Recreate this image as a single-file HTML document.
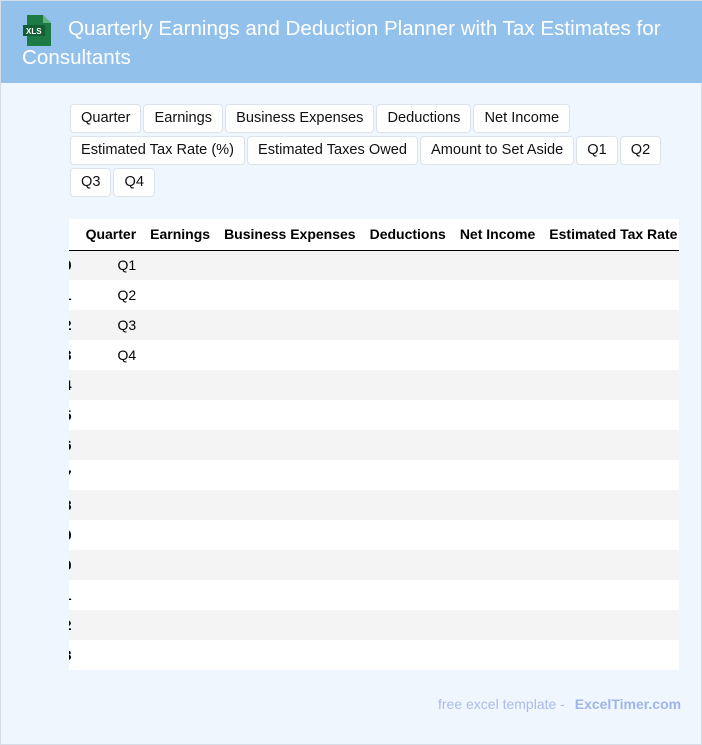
<!DOCTYPE html>
<html><head><style>
*{box-sizing:border-box;margin:0;padding:0}
body{width:702px;height:745px;background:#f0f6fe;font-family:"Liberation Sans",sans-serif;position:relative;overflow:hidden;border:1px solid #d6dde6}
.hdr{position:absolute;left:0;top:0;width:702px;height:82px;background:#92c1ec;color:#fff;font-size:20.6px;line-height:29px;padding:13px 20px 0 21px}
.tags{position:absolute;left:69px;top:103px;width:610px}
.tag{display:inline-block;float:left;height:29px;line-height:27px;border:1px solid #dde3ea;border-radius:4px;background:#fff;font-size:14.6px;padding:0 10px;margin:0 2px 3px 0;color:#111}
.tbl{position:absolute;left:68px;top:218px;width:610px;height:451px;overflow:hidden;background:#fff}
table{border-collapse:collapse;position:absolute;left:-20px;top:0;font-size:14px;white-space:nowrap}
th{height:31px;font-weight:bold;text-align:right;padding:0 7px;border-bottom:1px solid #000}
td{height:30px;padding:0 7px;text-align:right}
tr:nth-child(even) td{background:#f4f4f4}
td:first-child{font-weight:bold}
.ft{position:absolute;left:437px;top:695px;font-size:14px;color:#a9bce9}
.ft b{color:#9fb4ec;margin-left:6px}
.ic{position:absolute;left:21px;top:14px}
</style></head><body>
<div class="hdr"><span style="display:inline-block;width:46px"></span>Quarterly Earnings and Deduction Planner with Tax Estimates for Consultants</div>
<svg class="ic" width="30" height="31" viewBox="0 0 30 31"><path d="M5 0h16l8 8v23H5z" fill="#1d7a45"/><path d="M21 0v8h8z" fill="#5fb37f"/><rect x="1" y="10" width="22" height="11" fill="#155d34"/><text x="4" y="19" font-size="8" fill="#fff" font-family="Liberation Sans" font-weight="bold">XLS</text></svg>
<div class="tags">
<span class="tag">Quarter</span><span class="tag">Earnings</span><span class="tag">Business Expenses</span><span class="tag">Deductions</span><span class="tag">Net Income</span>
<span class="tag" style="clear:left">Estimated Tax Rate (%)</span><span class="tag">Estimated Taxes Owed</span><span class="tag">Amount to Set Aside</span><span class="tag">Q1</span><span class="tag">Q2</span>
<span class="tag" style="clear:left">Q3</span><span class="tag">Q4</span>
</div>
<div class="tbl"><table>
<tr><th style="width:30px"></th><th>Quarter</th><th>Earnings</th><th>Business Expenses</th><th>Deductions</th><th>Net Income</th><th>Estimated Tax Rate (%)</th></tr>
<tr><td>0</td><td>Q1</td><td></td><td></td><td></td><td></td><td></td></tr>
<tr><td>1</td><td>Q2</td><td></td><td></td><td></td><td></td><td></td></tr>
<tr><td>2</td><td>Q3</td><td></td><td></td><td></td><td></td><td></td></tr>
<tr><td>3</td><td>Q4</td><td></td><td></td><td></td><td></td><td></td></tr>
<tr><td>4</td><td></td><td></td><td></td><td></td><td></td><td></td></tr>
<tr><td>5</td><td></td><td></td><td></td><td></td><td></td><td></td></tr>
<tr><td>6</td><td></td><td></td><td></td><td></td><td></td><td></td></tr>
<tr><td>7</td><td></td><td></td><td></td><td></td><td></td><td></td></tr>
<tr><td>8</td><td></td><td></td><td></td><td></td><td></td><td></td></tr>
<tr><td>9</td><td></td><td></td><td></td><td></td><td></td><td></td></tr>
<tr><td>10</td><td></td><td></td><td></td><td></td><td></td><td></td></tr>
<tr><td>11</td><td></td><td></td><td></td><td></td><td></td><td></td></tr>
<tr><td>12</td><td></td><td></td><td></td><td></td><td></td><td></td></tr>
<tr><td>13</td><td></td><td></td><td></td><td></td><td></td><td></td></tr>
</table></div>
<div class="ft">free excel template - <b>ExcelTimer.com</b></div>
</body></html>
